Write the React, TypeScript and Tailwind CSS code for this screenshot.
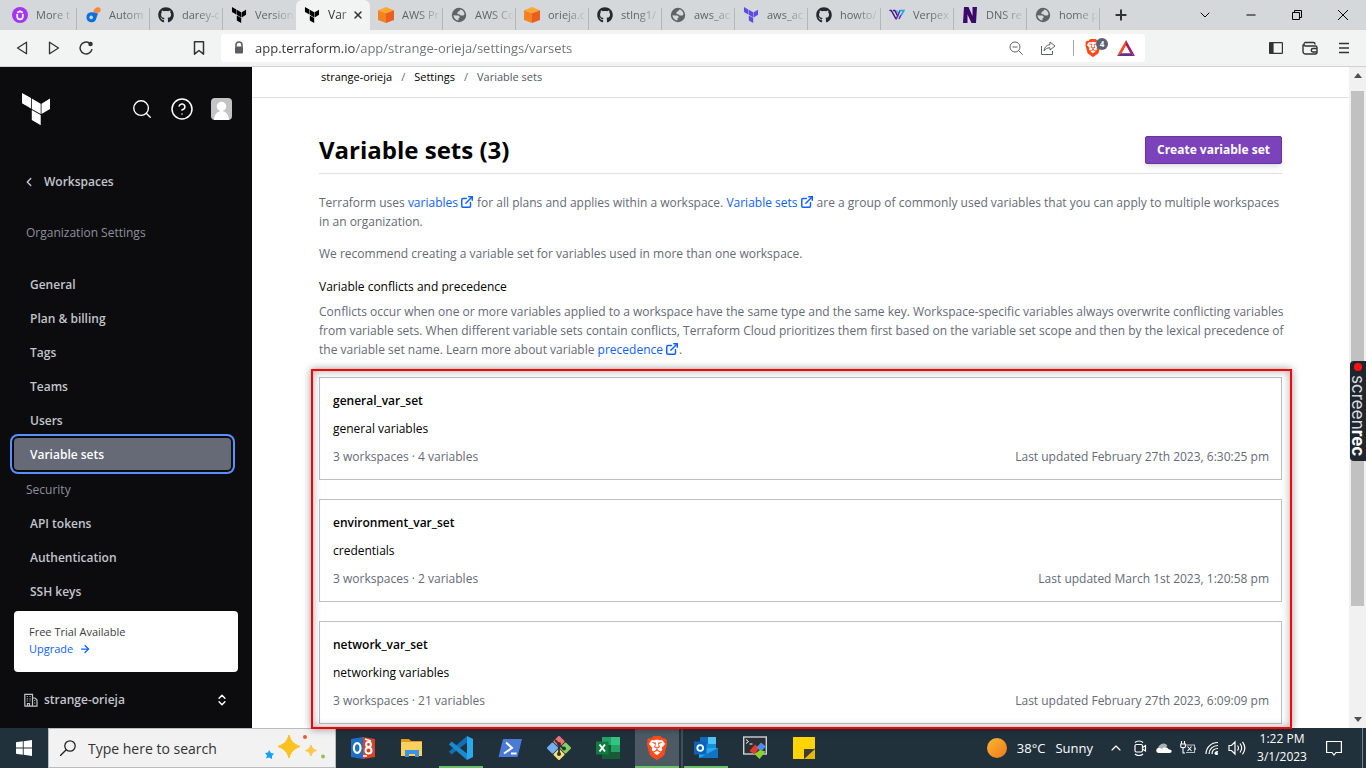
import type { ReactNode } from "react";
import {
  ArrowRight, ChevronDown, ChevronLeft, ChevronUp, ChevronsUpDown, CircleHelp,
  ExternalLink, Search, X, Plus, Minus,
} from "lucide-react";
import { SiTerraform, SiBrave } from "react-icons/si";
import { FaGithub } from "react-icons/fa";

/* ---------- browser chrome icons ---------- */

const Udemy = () => (
  <svg viewBox="0 0 16 16" className="size-4">
    <circle cx="8" cy="8" r="8" fill="#a435f0" />
    <path d="M5.200 7v2.500a2.800 2.800 0 0 0 5.600 0V7M5.200 5.800 8 4.200l2.800 1.600" fill="none" stroke="#fff" strokeWidth="1.700" />
  </svg>
);

const Docean = () => (
  <svg viewBox="0 0 16 16" className="size-4">
    <path d="M9 5.200H6A5 5 0 1 0 11.400 11L13 6.500z" fill="#0b6fe0" />
    <circle cx="6.200" cy="10.400" r="1.800" fill="#d4d8db" />
    <path d="M8.500 3.800C9.200 1.200 11.500 0 13.500.3c2 .3 2.800 2.300 1.900 3.900C14 6.200 11.500 5.800 10.800 5.600L8.500 5.600z" fill="#ff8a33" />
  </svg>
);

const Cube = () => (
  <svg viewBox="0 0 16 16" className="size-4">
    <path d="M8 0l8 3.300-8 3-8-3z" fill="#ffa733" />
    <path d="M0 3.300l8 3V16l-8-3z" fill="#f58220" />
    <path d="M16 3.300l-8 3V16l8-3z" fill="#ea5f1e" />
  </svg>
);

const Globe = () => (
  <svg viewBox="0 0 16 16" className="size-4">
    <circle cx="8" cy="8" r="7.200" fill="#5f6368" />
    <path d="M9.500 2.600L8 4.200 6.500 5v2l2.200.5 1 1h2.800l1-1.200c-.2-2.300-1.700-4.200-4-4.700z" fill="#d4d8db" />
    <path d="M2.500 8.200l2.800.3h2.200l1.500 1.700-1.500 1v2.200C4.800 13.300 2.600 11 2.500 8.200z" fill="#d4d8db" />
  </svg>
);

const Verpex = () => (
  <svg viewBox="0 0 16 16" className="size-4" fill="none" strokeWidth="1.500">
    <path d="M.5 3.500h1.800L7 12M4 3.500h1.800L9 9.500" stroke="#43148c" />
    <path d="M7 12.500l4-9M10 12l2-4" stroke="#5b2bb5" />
    <path d="M7.500 3.500l1 2M10.500 3.500h4.500L12 8.500" stroke="#20a5ea" />
  </svg>
);

const Namecheap = () => (
  <svg viewBox="0 0 16 16" className="size-4">
    <path d="M2 0h4.500l4 9V0H15l-1 16H9.500l-4-8.500L5.500 16H1z" fill="#3c0a6b" />
  </svg>
);

type Tab = { icon: ReactNode; title: string; active?: boolean };

const terraformDark = <SiTerraform className="size-4 text-black" />;
const github = <FaGithub className="size-4 text-[#24292f]" />;

const tabs: Tab[] = [
  { icon: <Udemy />, title: "More t" },
  { icon: <Docean />, title: "Autom" },
  { icon: github, title: "darey-c" },
  { icon: terraformDark, title: "Version" },
  { icon: terraformDark, title: "Var", active: true },
  { icon: <Cube />, title: "AWS Pr" },
  { icon: <Globe />, title: "AWS Co" },
  { icon: <Cube />, title: "orieja.c" },
  { icon: github, title: "stlng1/" },
  { icon: <Globe />, title: "aws_ac" },
  { icon: <SiTerraform className="size-4 text-[#5c4ee5]" />, title: "aws_ac" },
  { icon: github, title: "howto/" },
  { icon: <Verpex />, title: "Verpex" },
  { icon: <Namecheap />, title: "DNS re" },
  { icon: <Globe />, title: "home p" },
];

function TabStrip() {
  return (
    <div className="flex h-[30px] shrink-0 items-stretch bg-[#d4d8db] pl-1 text-[#5f6368]">
      <div className="flex" role="tablist">
        {tabs.map((t, i) => (
          <button
            key={i}
            role="tab"
            aria-selected={!!t.active}
            className={
              t.active
                ? "flex w-[74px] items-center rounded-t-md bg-[#f2f3f3] pl-2 text-[#333]"
                : "flex w-[73px] items-center pl-2"
            }
          >
            <span className="shrink-0">{t.icon}</span>
            <span
              className={
                t.active
                  ? "ml-2 w-[22px] text-left text-xs whitespace-nowrap [mask-image:linear-gradient(90deg,#000_50%,#0006)]"
                  : "ml-2 w-10 text-left text-[11px] whitespace-nowrap [mask-image:linear-gradient(90deg,#000_40%,transparent)]"
              }
            >
              {t.title}
            </span>
            {t.active ? (
              <X className="ml-0.5 size-3" strokeWidth={3} />
            ) : (
              <span className={i === 3 ? "" : "h-[22px] w-px self-end bg-[#b3b7ba]"} />
            )}
          </button>
        ))}
      </div>
      <button aria-label="New tab" className="flex w-[42px] items-center justify-center text-[#333]">
        <Plus className="size-4" strokeWidth={3} />
      </button>
      <div className="ml-auto flex text-black">
        <button aria-label="Search tabs" className="flex w-[46px] items-center justify-center">
          <ChevronDown className="size-4" strokeWidth={1.5} />
        </button>
        <button aria-label="Minimize" className="flex w-[46px] items-center justify-center">
          <Minus className="size-3.5" strokeWidth={2} />
        </button>
        <button aria-label="Restore" className="flex w-[46px] items-center justify-center">
          <svg viewBox="0 0 10 10" className="size-2.5" fill="none" stroke="currentColor">
            <path d="M.5 2.500h7v7h-7zM2.500 2.500v-2h7v7h-2" />
          </svg>
        </button>
        <button aria-label="Close" className="flex w-[46px] items-center justify-center">
          <svg viewBox="0 0 10 10" className="size-2.5" stroke="currentColor">
            <path d="M0 0l10 10M10 0L0 10" />
          </svg>
        </button>
      </div>
    </div>
  );
}

function BraveLion({ className }: { className: string }) {
  return (
    <span className={`relative flex items-center justify-center ${className}`}>
      <svg viewBox="0 0 24 24" className="absolute inset-0 size-full">
        <path d="M7 3h10l4 4-2.500 11L12 22l-6.500-4L3 7z" fill="#fff" />
      </svg>
      <SiBrave className="relative size-full text-[#fb4a1c]" />
    </span>
  );
}

function Toolbar() {
  return (
    <div className="flex h-[37px] shrink-0 items-center border-b border-[#cfd3d6] bg-[#f2f3f3] text-[#333]">
      <div className="flex items-center gap-4 pl-3.5">
        <button aria-label="Back">
          <svg viewBox="0 0 16 16" className="size-4" fill="none" stroke="currentColor" strokeWidth="1.300" strokeLinejoin="round">
            <path d="M12.500 2.200v11.600L3.500 8z" />
          </svg>
        </button>
        <button aria-label="Forward">
          <svg viewBox="0 0 16 16" className="size-4" fill="none" stroke="currentColor" strokeWidth="1.300" strokeLinejoin="round">
            <path d="M3.500 2.200v11.600l9-5.800z" />
          </svg>
        </button>
        <button aria-label="Reload">
          <svg viewBox="0 0 16 16" className="size-4" fill="none" stroke="currentColor" strokeWidth="1.500">
            <path d="M11.500 3A6 6 0 1 0 14 9.200" />
            <circle cx="12.500" cy="4" r="1.500" fill="currentColor" />
          </svg>
        </button>
      </div>
      <button aria-label="Bookmark" className="ml-[97px]">
        <svg viewBox="0 0 16 16" className="size-4" fill="none" stroke="currentColor" strokeWidth="1.500" strokeLinejoin="round">
          <path d="M3.500 1.800h9v12.400L8 10.500l-4.500 3.700z" />
        </svg>
      </button>
      <div className="ml-3.5 flex h-7 flex-1 items-center rounded bg-white pr-2.5 pl-3">
        <svg viewBox="0 0 12 14" className="h-3.5 w-3 shrink-0">
          <path d="M3 6V4a3 3 0 0 1 6 0v2" fill="none" stroke="#5a5e63" strokeWidth="1.500" />
          <rect x="2" y="5.500" width="8" height="7" rx="1" fill="#5a5e63" />
        </svg>
        <input
          aria-label="Address"
          defaultValue="app.terraform.io/app/strange-orieja/settings/varsets"
          className="ml-2.5 min-w-0 flex-1 bg-[linear-gradient(90deg,#333_100px,#6b7075_100px)] bg-clip-text pt-0.5 text-[13px] text-transparent outline-none"
        />
        <button aria-label="Zoom" className="text-[#5f6368]">
          <svg viewBox="0 0 16 16" className="size-4" fill="none" stroke="currentColor">
            <circle cx="7" cy="7" r="5" />
            <path d="M10.700 10.700l4 4M4.500 7h5" />
          </svg>
        </button>
        <button aria-label="Share" className="ml-4 text-[#5f6368]">
          <svg viewBox="0 0 16 16" className="size-4" fill="none" stroke="currentColor" strokeLinejoin="round">
            <path d="M1.500 6v8.500h11V11" />
            <path d="M10 2l5 4-5 4V7.800C7 7.800 5 9 4 11c.2-3.500 2.500-6 6-6.500z" />
          </svg>
        </button>
        <span className="ml-[17px] h-4 w-px bg-[#a5a9ad]" />
        <button aria-label="Brave Shields" className="relative ml-2.5">
          <BraveLion className="size-[18px]" />
          <span className="absolute -top-px -right-1.5 flex size-3 items-center justify-center rounded-full bg-[#5c6073] text-[8px] font-bold text-white">
            4
          </span>
        </button>
        <button aria-label="Brave Rewards" className="ml-[15px]">
          <svg viewBox="0 0 18 16" className="h-4 w-[18px]">
            <path d="M9 0L0 16l4.500-2.600L9 5.500z" fill="#ff4724" />
            <path d="M9 0l9 16-4.500-2.600L9 5.500z" fill="#9e1f63" />
            <path d="M0 16h18l-4.500-2.800h-9z" fill="#662d91" />
          </svg>
        </button>
      </div>
      <div className="ml-[123px] flex items-center gap-[18px] pr-3.5">
        <button aria-label="Sidebar">
          <svg viewBox="0 0 16 16" className="size-4" fill="none" stroke="currentColor" strokeWidth="1.200">
            <rect x="1.600" y="2.600" width="12.800" height="10.800" rx=".6" />
            <path d="M2 3h3v10H2z" fill="currentColor" />
          </svg>
        </button>
        <button aria-label="Wallet">
          <svg viewBox="0 0 16 16" className="size-4" fill="none" stroke="currentColor" strokeWidth="1.400">
            <path d="M13 4.500V4A1.500 1.500 0 0 0 11.500 2.500H3A2 2 0 0 0 3 6h10.500A1.500 1.500 0 0 1 15 7.500v5a1.500 1.500 0 0 1-1.500 1.500h-10A2.500 2.500 0 0 1 1 11.500V4.500" />
            <path d="M15 8.500h-4a1.500 1.500 0 0 0 0 3.500h4" />
          </svg>
        </button>
        <button aria-label="Menu">
          <svg viewBox="0 0 16 16" className="size-4" stroke="currentColor" strokeWidth="1.400">
            <path d="M3 3.500h10M3 8h10M3 12.500h10" />
          </svg>
        </button>
      </div>
    </div>
  );
}

/* ---------- Terraform Cloud sidebar ---------- */

const orgLinks = ["General", "Plan & billing", "Tags", "Teams", "Users", "Variable sets"];
const securityLinks = ["API tokens", "Authentication", "SSH keys"];

function NavList({ items, current }: { items: string[]; current?: string }) {
  return (
    <ul className="flex flex-col gap-0.5">
      {items.map((label) => (
        <li key={label}>
          <a
            href="#"
            aria-current={label === current ? "page" : undefined}
            className={
              label === current
                ? "flex h-8 items-center rounded bg-[#656a76] px-4 pt-0.5 text-white ring-2 ring-[#5990ff] ring-offset-2 ring-offset-[#0c0c0e]"
                : "flex h-8 items-center rounded px-4 pt-0.5"
            }
          >
            {label}
          </a>
        </li>
      ))}
    </ul>
  );
}

function Sidebar() {
  return (
    <aside className="flex w-[252px] shrink-0 flex-col bg-[#0c0c0e] pt-[26px] pr-[21px] pl-3.5 text-xs font-semibold text-[#c2c5cb]">
      <div className="-mr-px flex h-8 items-center pl-2">
        <a href="#" aria-label="Terraform Cloud" className="text-white">
          <svg viewBox="0 0 28 32" className="h-8 w-7" fill="currentColor">
            <path d="M0 0l9 5.100v10.300L0 10.300zM9.800 5.600l8.900 5.100V21l-8.900-5.100zM19.500 10.700l8.500-5.100v10.300L19.500 21zM9.800 16.900l8.900 5.100v10.200l-8.900-5.100z" />
          </svg>
        </a>
        <button aria-label="Search" className="ml-auto text-white">
          <Search className="size-[22px]" strokeWidth={1.5} />
        </button>
        <button aria-label="Help" className="ml-[17px] text-white">
          <CircleHelp className="size-6" strokeWidth={1.5} />
        </button>
        <button aria-label="Account" className="ml-[17px] overflow-hidden rounded-sm">
          <svg viewBox="0 0 21 22" className="h-[22px] w-[21px]">
            <rect width="21" height="22" fill="#c4c4c4" />
            <circle cx="10.500" cy="8.500" r="4.700" fill="#fff" />
            <path d="M3 22c0-5 3-9 7.500-9s7.500 4 7.500 9z" fill="#fff" />
          </svg>
        </button>
      </div>

      <a href="#" className="mt-10 flex h-8 items-center gap-2 pt-0.5 pl-2">
        <ChevronLeft className="size-3.5" strokeWidth={2.5} />
        Workspaces
      </a>

      <h2 className="mt-6 flex h-6 items-center pl-3 font-normal text-[#8c909c]">Organization Settings</h2>
      <nav aria-label="Organization settings" className="mt-[23px]">
        <NavList items={orgLinks} current="Variable sets" />
      </nav>

      <h2 className="mt-2 flex h-6 items-center pl-3 font-normal text-[#8c909c]">Security</h2>
      <nav aria-label="Security" className="mt-[5px]">
        <NavList items={securityLinks} />
      </nav>

      <div className="mt-1 -mr-[7px] rounded bg-white px-[15px] pt-3 pb-[15px] text-[11px] leading-[17px] font-normal text-[#3b3d45]">
        <p>Free Trial Available</p>
        <a href="#" className="flex items-center gap-1.5 text-[#1060ff]">
          Upgrade <ArrowRight className="size-3" strokeWidth={2.5} />
        </a>
      </div>

      <button className="mt-[11px] flex h-8 items-center pt-0.5 pl-2.5">
        <svg viewBox="0 0 14 14" className="size-3.5" fill="none" stroke="currentColor" strokeWidth="1.200">
          <path d="M.8 13.200V1.300h7.700v11.900M8.500 5h2.500l2 2v6.200H.5M3.500 13v-2.500h2V13" />
          <path d="M2.800 3.500h1M5.500 3.500h1M2.800 5.800h1M5.500 5.800h1M2.800 8h1M5.500 8h1M10.200 7.500h1M10.200 10h1" />
        </svg>
        <span className="ml-1.5">strange-orieja</span>
        <ChevronsUpDown className="mr-0.5 ml-auto size-3.5 text-white" strokeWidth={2.5} />
      </button>
    </aside>
  );
}

/* ---------- Variable sets page ---------- */

function Out({ children }: { children: ReactNode }) {
  return (
    <a href="#" className="text-[#1060ff]">
      {children}
      <ExternalLink className="-mt-1 ml-0.5 inline size-3.5" strokeWidth={2.5} />
    </a>
  );
}

const varsets = [
  { name: "general_var_set", desc: "general variables", meta: "3 workspaces · 4 variables", updated: "Last updated February 27th 2023, 6:30:25 pm" },
  { name: "environment_var_set", desc: "credentials", meta: "3 workspaces · 2 variables", updated: "Last updated March 1st 2023, 1:20:58 pm" },
  { name: "network_var_set", desc: "networking variables", meta: "3 workspaces · 21 variables", updated: "Last updated February 27th 2023, 6:09:09 pm" },
];

function Page() {
  return (
    <main className="min-w-0 flex-1 bg-white text-xs leading-[19px] text-[#656a76]">
      <nav aria-label="Breadcrumb" className="flex h-[31px] items-start border-b border-[#dedfe3] pl-[69px] text-[11px] leading-5 text-black">
        <a href="#">strange-orieja</a>
        <span className="w-[22px] text-center text-[#656a76]">/</span>
        <a href="#">Settings</a>
        <span className="w-[22px] text-center text-[#656a76]">/</span>
        <span className="text-[#525761]">Variable sets</span>
      </nav>
      <div className="pt-[38px] pr-[67px] pl-[67px]">
        <div className="flex items-center justify-between border-b border-[#dedfe3] pb-[9px]">
          <h1 className="text-2xl leading-7 font-bold text-black">Variable sets (3)</h1>
          <button className="h-7 rounded-xs border border-[#63389a] bg-[#7b42bc] px-[11px] pb-0.5 font-bold text-white shadow-md">
            Create variable set
          </button>
        </div>
        <p className="mt-[19px]">
          Terraform uses <Out>variables</Out> for all plans and applies within a workspace. <Out>Variable sets</Out> are
          a group of commonly used variables that you can apply to multiple workspaces in an organization.
        </p>
        <p className="mt-[13px]">We recommend creating a variable set for variables used in more than one workspace.</p>
        <h2 className="mt-3.5 font-medium text-black">Variable conflicts and precedence</h2>
        <p className="mt-1.5 -mr-3">
          Conflicts occur when one or more variables applied to a workspace have the same type and the same key.
          Workspace-specific variables always overwrite conflicting variables from variable sets. When different
          variable sets contain conflicts, Terraform Cloud prioritizes them first based on the variable set scope and
          then by the lexical precedence of the variable set name. Learn more about variable <Out>precedence</Out>.
        </p>
        <div className="relative mt-[18px]">
          <ul className="flex flex-col gap-[19px]">
            {varsets.map((v) => (
              <li key={v.name} className="flex flex-col gap-[9px] border border-[#bcbfc7] py-[13px] pr-3 pl-[13px]">
                <a href="#" className="font-semibold text-black">{v.name}</a>
                <p className="text-black">{v.desc}</p>
                <div className="flex justify-between">
                  <span>{v.meta}</span>
                  <span>{v.updated}</span>
                </div>
              </li>
            ))}
          </ul>
          <div className="pointer-events-none absolute -inset-x-2 -top-2 -bottom-[5px] z-10 -mr-0.5 border-2 border-[#f00] shadow-[0_0_8px_#0006,inset_0_0_8px_#0005]" />
        </div>
      </div>
    </main>
  );
}

function Scrollbar() {
  return (
    <div className="relative flex w-[17px] shrink-0 flex-col items-center bg-[#f1f1f1] py-1.5">
      <svg viewBox="0 0 8 5" className="h-[5px] w-2"><path d="M0 5l4-5 4 5z" fill="#505050" /></svg>
      <div className="mt-[13px] mb-[111px] w-[13px] flex-1 bg-[#c1c1c1]" />
      <svg viewBox="0 0 8 5" className="h-[5px] w-2"><path d="M0 0l4 5 4-5z" fill="#505050" /></svg>
      <div className="absolute top-[294px] right-0 flex h-[100px] w-4 flex-col items-center rounded-l bg-[#20262e] pt-0.5">
        <span className="size-2 shrink-0 rounded-full bg-[#f11]" />
        <span className="mt-1 font-['Inter',sans-serif] text-[17px] leading-4 text-[#d8dadc] [writing-mode:vertical-rl]">
          screen<b className="text-white">rec</b>
        </span>
      </div>
    </div>
  );
}

/* ---------- Windows taskbar ---------- */

const OutlookOld = () => (
  <svg viewBox="0 0 24 24" className="size-6">
    <path d="M0 3l12-2v22L0 21z" fill="#1f6fc4" />
    <path d="M12 1l12 2v18l-12 2z" fill="#d7402b" />
    <ellipse cx="6.200" cy="12" rx="3.300" ry="4.800" fill="none" stroke="#fff" strokeWidth="2.200" />
    <circle cx="17.500" cy="8.500" r="2.400" fill="none" stroke="#fff" strokeWidth="2" />
    <circle cx="17.500" cy="14.500" r="3" fill="none" stroke="#fff" strokeWidth="2" />
    <path d="M14 3l6 2M12 20h4" stroke="#fff" strokeWidth="1.500" />
  </svg>
);
const Folder = () => (
  <svg viewBox="0 0 24 24" className="size-6">
    <path d="M1 3h8l2 2h11v4H1z" fill="#e09b1a" />
    <path d="M1 6h21v14H1z" fill="#fbd060" />
    <path d="M5 21v-7h14v7h-4v-3H9v3z" fill="#3d94dc" />
  </svg>
);
const VsCode = () => (
  <svg viewBox="0 0 24 24" className="size-6">
    <path d="M18 0L0 15.500l2.500 3L18 6.500z" fill="#1070b3" />
    <path d="M18 24L0 8.500l2.500-3L18 17.500z" fill="#1b8ad0" />
    <path d="M18 0l6 3v18l-6 3z" fill="#29a8ee" />
  </svg>
);
const PowerShell = () => (
  <svg viewBox="0 0 24 24" className="size-6">
    <path d="M5 3h19l-4.500 18H.5z" fill="#4a7ad6" />
    <path d="M8 6.500l6 5.500-8 5.500M13 17.500h5.500" fill="none" stroke="#fff" strokeWidth="2" />
  </svg>
);
const GitBash = () => (
  <svg viewBox="0 0 24 24" className="size-6">
    <g transform="rotate(45 12 12)">
      <rect x="3.200" y="3.200" width="8.400" height="8.400" rx="1" fill="#f07272" />
      <rect x="12.400" y="3.200" width="8.400" height="8.400" rx="1" fill="#87cf63" />
      <rect x="12.400" y="12.400" width="8.400" height="8.400" rx="1" fill="#f6df74" />
      <rect x="3.200" y="12.400" width="8.400" height="8.400" rx="1" fill="#74aef5" />
    </g>
    <path d="M8 4l4 4v10M12 9l5 4" fill="none" stroke="#333" strokeWidth="1.800" />
    <circle cx="12" cy="8" r="2" fill="#333" /><circle cx="12" cy="18" r="2" fill="#333" /><circle cx="17" cy="12.500" r="2" fill="#333" />
  </svg>
);
const Excel = () => (
  <svg viewBox="0 0 24 24" className="size-6">
    <path d="M6 1h18v22H6z" fill="#185c37" />
    <path d="M6 1h9v8H6z" fill="#21a366" /><path d="M15 1h9v8h-9z" fill="#33c481" /><path d="M15 9h9v7h-9z" fill="#21a366" />
    <rect y="5.500" width="12.500" height="13" fill="#107c41" />
    <path d="M3.500 8.500l5.500 7M9 8.500l-5.500 7" stroke="#fff" strokeWidth="2" />
  </svg>
);
const OutlookNew = () => (
  <svg viewBox="0 0 24 24" className="size-6">
    <path d="M6 1h16v12H6z" fill="#1490df" /><path d="M14 1h8v7h-8z" fill="#50c4f5" /><path d="M6 1h8v7H6z" fill="#0f6cbd" />
    <path d="M5 12h19v10H5z" fill="#28a8ea" /><path d="M5 22l19-10v10z" fill="#1273c4" />
    <rect y="5.500" width="12.500" height="13" fill="#0a64b8" />
    <circle cx="6.200" cy="12" r="2.900" fill="none" stroke="#fff" strokeWidth="1.800" />
  </svg>
);
const MobaTerm = () => (
  <svg viewBox="0 0 24 24" className="size-6">
    <rect x=".7" y="1" width="22.600" height="17" fill="#2c2f33" stroke="#cfd2d4" strokeWidth="1.400" />
    <path d="M3 3.500l2.500 2L3 7.500M6.500 8h3" fill="none" stroke="#fff" />
    <path d="M12 8.500l4 3.500-4.500 6.500L6.500 15z" fill="#e8392b" /><path d="M18 6.500l5 4-5 5-4.500-4z" fill="#4d8fe8" /><path d="M11.500 18l5.500-4 5.500 1.500-6 7.500z" fill="#8ad32c" />
  </svg>
);
const Sticky = () => (
  <svg viewBox="0 0 24 24" className="size-6">
    <path d="M1 1h22v11L12 23H1z" fill="#ffd400" />
    <path d="M12 23l11-11v11z" fill="#e6b800" />
    <path d="M12 13h11L12 23z" fill="#3c3c3c" />
  </svg>
);

const apps = [
  { name: "Outlook and Gmail", icon: <OutlookOld />, cls: "" },
  { name: "File Explorer", icon: <Folder />, cls: "" },
  { name: "Visual Studio Code", icon: <VsCode />, cls: "border-b-2 border-[#6abf69]" },
  { name: "PowerShell", icon: <PowerShell />, cls: "" },
  { name: "Git Bash", icon: <GitBash />, cls: "" },
  { name: "Excel", icon: <Excel />, cls: "" },
  { name: "Brave", icon: <BraveLion className="size-6" />, cls: "border-b-2 border-[#6abf69] bg-[#4d5a64] shadow-[2px_0_#21313c,4px_0_#414f59]" },
  { name: "Outlook", icon: <OutlookNew />, cls: "border-b-2 border-[#6abf69]" },
  { name: "MobaXterm", icon: <MobaTerm />, cls: "" },
  { name: "Sticky Notes", icon: <Sticky />, cls: "" },
];

function Sparkles() {
  return (
    <svg viewBox="0 0 62 28" className="h-7 w-[62px] shrink-0">
      <path d="M24 1c2 6 3.500 8.500 11 11.500-7.500 3-9 5.500-11 11.500-2-6-3.500-8.500-11-11.500C20.500 9.500 22 7 24 1z" fill="#fbc11f" stroke="#fbc11f" strokeLinejoin="round" />
      <path d="M46 11c1 3 2 4.500 5.500 5.500C48 17.500 47 19 46 22c-1-3-2-4.500-5.500-5.500C44 15.500 45 14 46 11z" fill="#fbc84a" stroke="#fbc84a" strokeLinejoin="round" />
      <path d="M4 16l2 3 3 .5-2 2.500 0 3-3-1.500-3 1 1-3-2-2.500 3-.5z" fill="#18a2ee" />
      <circle cx="40" cy="3" r="2" fill="#ee5b2b" />
      <circle cx="58" cy="22.500" r="2" fill="#8bc94a" />
    </svg>
  );
}

function Taskbar() {
  return (
    <footer className="flex h-10 shrink-0 items-stretch bg-[#21313c] text-white">
      <button aria-label="Start" className="flex w-12 items-center justify-center">
        <svg viewBox="0 0 16 16" className="size-4" fill="#fff">
          <path d="M0 2.300l6.800-1v6.300H0zM7.700 1.200L16 0v7.600H7.700zM0 8.400h6.800v6.300l-6.800-1zM7.700 8.400H16V16l-8.300-1.200z" />
        </svg>
      </button>
      <label className="flex w-72 items-center border border-[#b9bcbe] bg-[#f2f2f2] pr-2 pl-[11px] text-[#222]">
        <svg viewBox="0 0 16 16" className="size-4 shrink-0" fill="none" stroke="currentColor" strokeWidth="1.300">
          <circle cx="10" cy="6" r="5.200" /><path d="M6.200 9.800L0 16" />
        </svg>
        <input aria-label="Search" placeholder="Type here to search" className="ml-3 min-w-0 flex-1 pt-0.5 text-sm outline-none placeholder:text-[#333]" />
        <Sparkles />
      </label>
      <div className="flex items-stretch gap-[5px] pl-[5px]">
        {apps.map((a) => (
          <button key={a.name} aria-label={a.name} className={`flex w-11 items-start justify-center pt-2 ${a.cls}`}>
            {a.icon}
          </button>
        ))}
      </div>
      <div className="ml-auto flex items-center">
        <button className="flex items-center gap-2.5 text-[13px]">
          <span className="size-5 rounded-full bg-linear-to-br from-[#f7b733] to-[#f0761a]" />
          <span className="flex gap-2.5 pt-0.5"><span>38°C</span><span>Sunny</span></span>
        </button>
        <div className="ml-[15px] flex items-center gap-2">
          <ChevronUp className="size-4" strokeWidth={1.75} />
          <svg viewBox="0 0 16 16" className="size-4" fill="none" stroke="currentColor" strokeWidth="1.200">
            <rect x="3" y="4.500" width="7.500" height="7.500" rx="1.500" /><path d="M10.500 7.500l3-2v5.500l-3-2M3 2.500c2-2 6-2 8 0M3 14c2 2 6 2 8 0" />
          </svg>
          <svg viewBox="0 0 16 12" className="h-3 w-4">
            <path d="M3 9a4 4 0 0 1 1-6 4.500 4.500 0 0 1 7.500 1z" fill="#aab1b6" /><path d="M2.500 11a2.500 2.500 0 0 1 .5-5c2 0 2.500 1 3 1 1-2 5-3 6.500.2 4 0 4 3.800 1 3.800z" fill="#fff" />
          </svg>
          <svg viewBox="0 0 16 16" className="size-4" fill="none" stroke="currentColor" strokeWidth="1.100">
            <path d="M1.500 1v3M4.500 1v3M.8 4h4.500v3c0 1-4.500 1-4.500 0zM3 8v5h2" /><path d="M6 5h8.500v7.500H6M15.500 7.500v2.500" stroke="#b8bfc4" /><path d="M7.500 6.500l4 4.500M11.500 6.500l-4 4.500" />
          </svg>
          <svg viewBox="0 0 16 16" className="size-4" fill="none" stroke="currentColor" strokeWidth="1.200">
            <path d="M2 14C2 7.500 7 2.500 14 2.500M5 14c0-5 4-8.500 9-8.500M8 14c0-3.500 2.500-5.500 6-5.500M11 14c0-1.500 1-2.500 3-2.500" /><circle cx="12.500" cy="13.500" r="1" fill="currentColor" />
          </svg>
          <svg viewBox="0 0 18 16" className="h-4 w-[18px]" fill="none" stroke="currentColor" strokeWidth="1.200">
            <path d="M1 5.500h2.500L7 2v12l-3.500-3.500H1zM9.500 5.500c1.200 1.500 1.200 3.500 0 5M12 3.500c2.200 3 2.200 6 0 9M14.500 1.800c3 4 3 8.500 0 12.500" />
          </svg>
        </div>
        <div className="ml-2 w-14 text-center text-xs leading-[18px]">
          <p className="whitespace-nowrap">1:22 PM</p>
          <p className="whitespace-nowrap">3/1/2023</p>
        </div>
        <button aria-label="Notifications" className="ml-4">
          <svg viewBox="0 0 16 16" className="size-4" fill="none" stroke="currentColor" strokeWidth="1.200">
            <path d="M.6 1.500h14.800v11H10L8 15l-2-2.500H.6z" />
          </svg>
        </button>
        <span className="mr-[3px] ml-5 h-10 w-px bg-[#75828a]" />
      </div>
    </footer>
  );
}

export default function App() {
  return (
    <div className="flex min-h-screen flex-col font-['Open_Sans','Noto_Sans',sans-serif]">
      <TabStrip />
      <Toolbar />
      <div className="flex flex-1 items-stretch">
        <Sidebar />
        <Page />
        <Scrollbar />
      </div>
      <Taskbar />
    </div>
  );
}
